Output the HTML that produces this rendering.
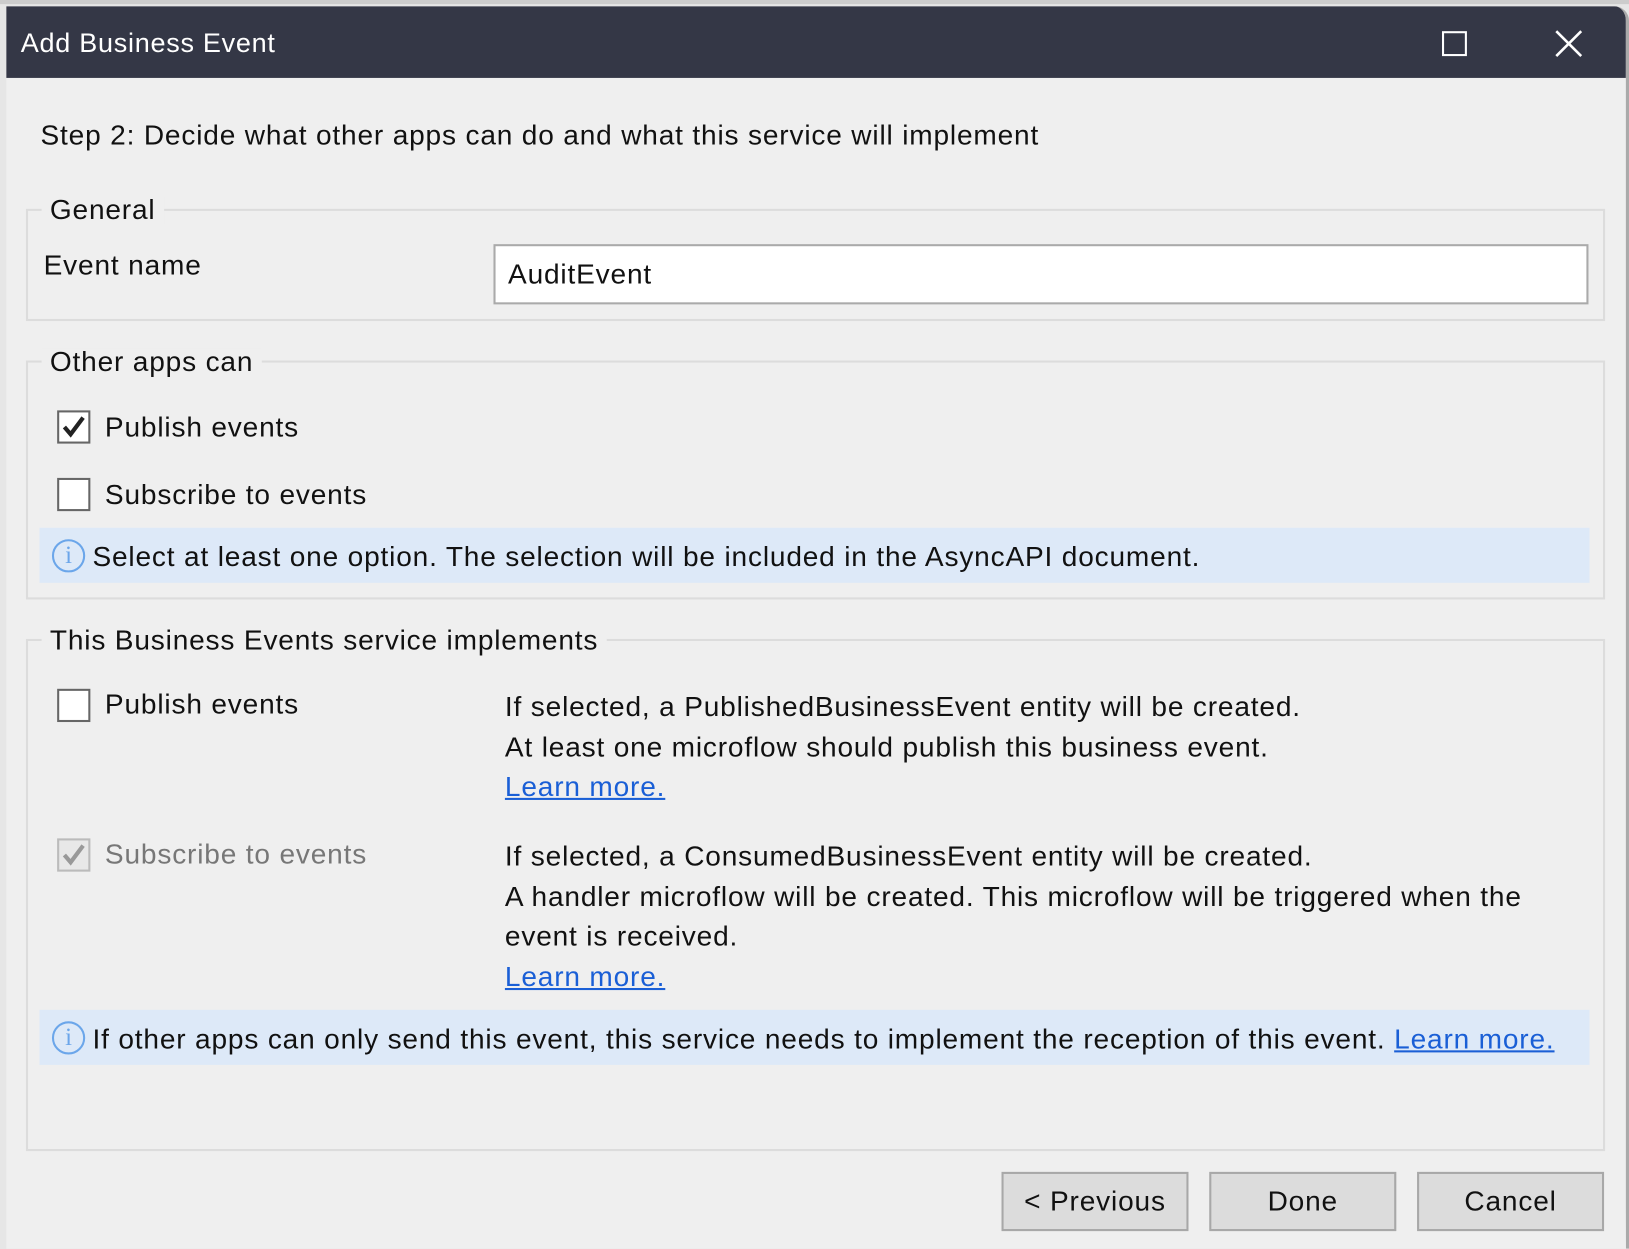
<!DOCTYPE html>
<html><head><meta charset="utf-8"><style>
html,body{margin:0;padding:0;width:1629px;height:1249px;overflow:hidden;background:#e6e6e6;font-family:"Segoe UI","Liberation Sans",sans-serif;}
#s{position:absolute;left:0;top:0;width:1568px;height:1202px;transform:scale(1.0389);transform-origin:0 0;}
.a{position:absolute;white-space:nowrap;font-size:27px;letter-spacing:0.8px;color:#111;line-height:1;}
#dlg{position:absolute;left:6px;top:6px;width:1559px;height:1196px;background:#efefef;border-right:3px solid #aaa;border-radius:0 14px 0 0;overflow:hidden}
.tb{position:absolute;left:0;top:0;width:1559px;height:69px;background:#343746}
.gb{position:absolute;border:2px solid #dcdcdc}
.lg{background:#efefef;padding:0 8px}
.cb{position:absolute;width:28px;height:28px;border:2px solid #666;background:#fff}
.info{position:absolute;left:32px;width:1492px;height:53px;background:#dde9f8}
.ic{position:absolute;left:12px;top:11px;width:28px;height:28px;border:2px solid #6ba6ea;border-radius:50%;color:#6ba6ea;font-family:"Liberation Serif",serif;font-size:24px;text-align:center;line-height:28px}
a{color:#1a5fd6;text-decoration:underline}
.btn{position:absolute;top:1122px;width:176px;height:53px;background:#dcdcdc;border:2px solid #a8a8a8;font-size:27px;letter-spacing:0.8px;text-align:center;line-height:53px;color:#111}
</style></head><body><div id="s">
<div style="position:absolute;left:0;top:0;width:1568px;height:4px;background:#ccc"></div>
<div id="dlg">
<div class="tb"></div>
<div class="a" style="left:14px;top:22px;color:#fff;font-size:26px;letter-spacing:0.7px">Add Business Event</div>
<div style="position:absolute;left:1382px;top:24px;width:20px;height:20px;border:2px solid #fff"></div>
<svg style="position:absolute;left:1490px;top:22px" width="28" height="28"><path d="M2 2L26 26M26 2L2 26" stroke="#fff" stroke-width="2.5"/></svg>

<div class="a" style="left:33px;top:111px">Step 2: Decide what other apps can do and what this service will implement</div>

<div class="gb" style="left:19px;top:195px;width:1516px;height:104px"></div>
<div class="a lg" style="left:34px;top:183px">General</div>
<div class="a" style="left:36px;top:236px">Event name</div>
<div style="position:absolute;left:469px;top:229px;width:1050px;height:54px;background:#fff;border:2px solid #aaa"></div>
<div class="a" style="left:483px;top:245px">AuditEvent</div>

<div class="gb" style="left:19px;top:341px;width:1516px;height:226px"></div>
<div class="a lg" style="left:34px;top:329px">Other apps can</div>
<div class="cb" style="left:49px;top:389px"><svg width="28" height="28"><path d="M5 14L11 21L23 5" stroke="#222" stroke-width="4" fill="none"/></svg></div>
<div class="a" style="left:95px;top:392px">Publish events</div>
<div class="cb" style="left:49px;top:454px"></div>
<div class="a" style="left:95px;top:457px">Subscribe to events</div>
<div class="info" style="top:502px"><div class="ic">i</div></div>
<div class="a" style="left:83px;top:517px">Select at least one option. The selection will be included in the AsyncAPI document.</div>

<div class="gb" style="left:19px;top:609px;width:1516px;height:489px"></div>
<div class="a lg" style="left:34px;top:597px">This Business Events service implements</div>
<div class="cb" style="left:49px;top:657px"></div>
<div class="a" style="left:95px;top:659px">Publish events</div>
<div class="a" style="left:480px;top:661px">If selected, a PublishedBusinessEvent entity will be created.</div>
<div class="a" style="left:480px;top:700px">At least one microflow should publish this business event.</div>
<div class="a" style="left:480px;top:738px"><a>Learn more.</a></div>
<div class="cb" style="left:49px;top:801px;border-color:#bbb;background:#e8e8e8"><svg width="28" height="28"><path d="M5 14L11 21L23 5" stroke="#999" stroke-width="4" fill="none"/></svg></div>
<div class="a" style="left:95px;top:803px;color:#777">Subscribe to events</div>
<div class="a" style="left:480px;top:805px">If selected, a ConsumedBusinessEvent entity will be created.</div>
<div class="a" style="left:480px;top:844px">A handler microflow will be created. This microflow will be triggered when the</div>
<div class="a" style="left:480px;top:882px">event is received.</div>
<div class="a" style="left:480px;top:921px"><a>Learn more.</a></div>
<div class="info" style="top:966px"><div class="ic">i</div></div>
<div class="a" style="left:83px;top:981px">If other apps can only send this event, this service needs to implement the reception of this event. <a>Learn more.</a></div>

<div class="btn" style="left:958px">&lt; Previous</div>
<div class="btn" style="left:1158px">Done</div>
<div class="btn" style="left:1358px">Cancel</div>
</div>
</div></body></html>
